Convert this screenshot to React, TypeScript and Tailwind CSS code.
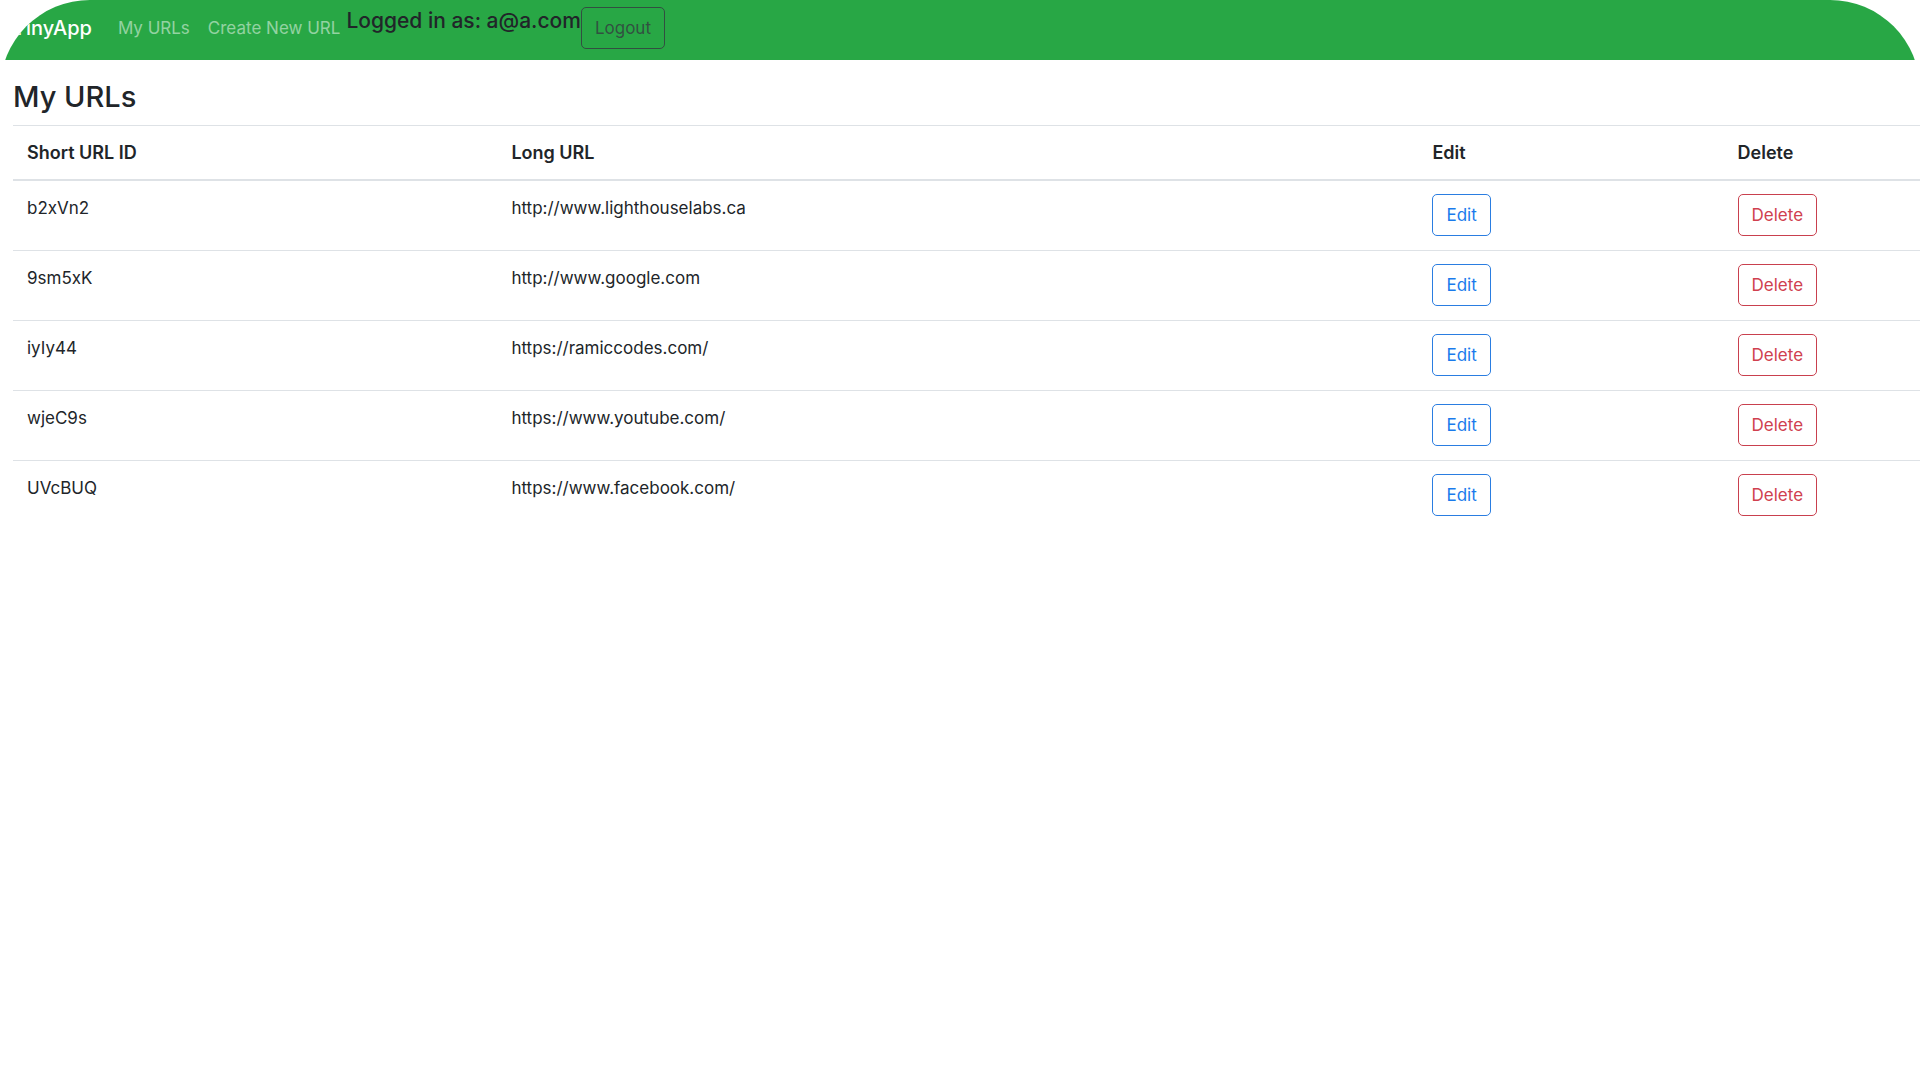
const urls = [
  { id: "b2xVn2", longUrl: "http://www.lighthouselabs.ca" },
  { id: "9sm5xK", longUrl: "http://www.google.com" },
  { id: "iyIy44", longUrl: "https://ramiccodes.com/" },
  { id: "wjeC9s", longUrl: "https://www.youtube.com/" },
  { id: "UVcBUQ", longUrl: "https://www.facebook.com/" },
];

function Navbar() {
  return (
    <nav className="flex h-[60px] items-center bg-[#28a745] pb-1 pl-[13px]">
      <a href="#" className="mr-[26px] text-[20px] leading-7 font-medium text-white">
        TinyApp
      </a>
      <a href="#urls" className="mr-[18px] text-[17px] leading-7 text-white/50">
        My URLs
      </a>
      <a href="#new" className="mr-[6px] text-[17px] leading-7 text-white/50">
        Create New URL
      </a>
      <form className="flex items-start" onSubmit={(e) => e.preventDefault()}>
        <h5 className="text-[21px] leading-7 font-medium text-[#212529]">
          Logged in as: a@a.com
        </h5>
        <button
          type="submit"
          className="h-[42px] rounded-[5px] border border-[#343a40]/80 px-[13px] text-[17px] leading-7 text-[#343a40]/80"
        >
          Logout
        </button>
      </form>
    </nav>
  );
}

function UrlTable() {
  return (
    <table className="w-full table-fixed border-separate border-spacing-0 text-left text-[17px] leading-7">
      <colgroup>
        <col className="w-[25.4%]" />
        <col className="w-[48.3%]" />
        <col className="w-[16%]" />
        <col className="w-[10.3%]" />
      </colgroup>
      <thead>
        <tr>
          {["Short URL ID", "Long URL", "Edit", "Delete"].map((label) => (
            <th
              key={label}
              scope="col"
              className="border-t border-b-2 border-[#dee2e6] px-[14px] pt-[13px] pb-3 text-[18px] leading-7 font-semibold"
            >
              {label}
            </th>
          ))}
        </tr>
      </thead>
      <tbody className="[&>tr+tr>td]:border-t [&>tr+tr>td]:border-[#dee2e6]">
        {urls.map(({ id, longUrl }) => (
          <tr key={id} className="align-top">
            <td className="px-[14px] py-[13px]">{id}</td>
            <td className="px-[14px] py-[13px]">{longUrl}</td>
            <td className="px-[14px] pt-[13px] pb-[14px]">
              <button
                type="button"
                aria-label={`Edit ${id}`}
                className="block h-[42px] rounded-[5px] border border-[#2a7de1] px-[13px] text-[#1a7bec]"
              >
                Edit
              </button>
            </td>
            <td className="px-[14px] pt-[13px] pb-[14px]">
              <button
                type="button"
                aria-label={`Delete ${id}`}
                className="block h-[42px] rounded-[5px] border border-[#c9404e] px-[13px] text-[#d0404f]"
              >
                Delete
              </button>
            </td>
          </tr>
        ))}
      </tbody>
    </table>
  );
}

export default function App() {
  return (
    <div className="min-h-screen overflow-hidden rounded-t-[90px] bg-white font-['Inter',sans-serif] text-[#212529]">
      <Navbar />
      <main className="pt-[18px] pl-[13px]">
        <h3 className="mb-[9px] text-[29px] leading-[38px] font-medium">My URLs</h3>
        <UrlTable />
      </main>
    </div>
  );
}
